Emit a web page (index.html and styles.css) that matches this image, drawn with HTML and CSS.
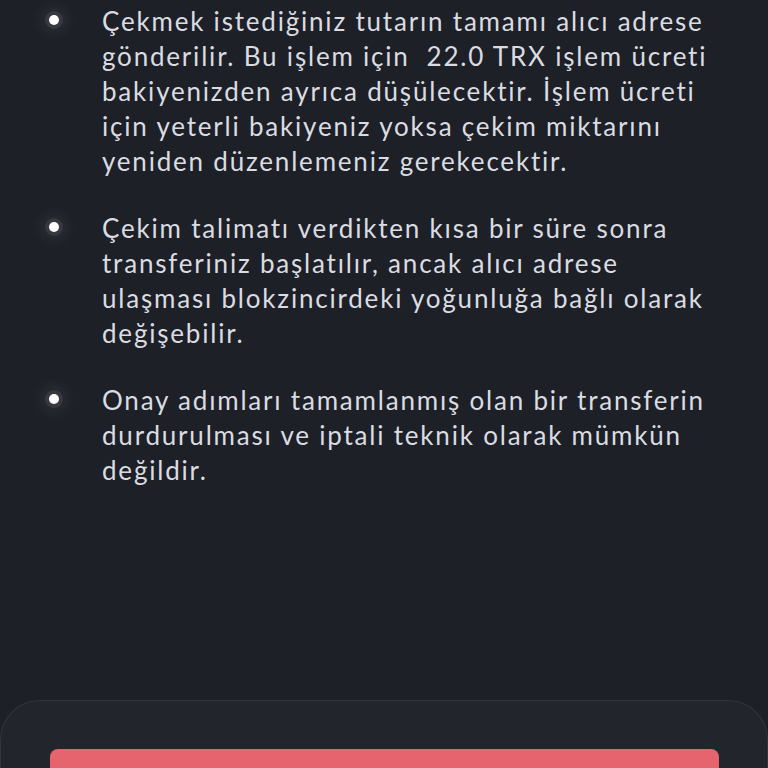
FILE: index.html
```html
<!DOCTYPE html>
<html lang="tr">
<head>
  <meta charset="UTF-8" />
  <meta name="viewport" content="width=device-width, initial-scale=1.0"/>
  <title>Çekim Bilgilendirme</title>
  <link rel="stylesheet" href="styles.css">
</head>
<body>

<!-- Bilgilendirme listesi -->
<ul class="info-list">
  <li class="info-list__item">
    <span class="info-list__dot"></span>
    <p>Çekmek istediğiniz tutarın tamamı alıcı adrese gönderilir. Bu işlem için&nbsp; 22.0 TRX işlem ücreti bakiyenizden ayrıca düşülecektir. İşlem ücreti için yeterli bakiyeniz yoksa çekim miktarını yeniden düzenlemeniz gerekecektir.</p>
  </li>
  <li class="info-list__item">
    <span class="info-list__dot"></span>
    <p>Çekim talimatı verdikten kısa bir süre sonra transferiniz başlatılır, ancak alıcı adrese ulaşması blokzincirdeki yoğunluğa bağlı olarak değişebilir.</p>
  </li>
  <li class="info-list__item">
    <span class="info-list__dot"></span>
    <p>Onay adımları tamamlanmış olan bir transferin durdurulması ve iptali teknik olarak mümkün değildir.</p>
  </li>
</ul>

<!-- Alt panel -->
<div class="bottom-sheet">
  <button type="button" class="btn-confirm" aria-label="Onayla"></button>
</div>

</body>
</html>
```

FILE: styles.css
```css
* {
  margin: 0;
  padding: 0;
  box-sizing: border-box;
}

body {
  background: #1e2027;
  font-family: Lato, Arial, sans-serif;
  color: #dadce1;
  height: 768px;
  overflow: hidden;
  display: flex;
  flex-direction: column;
}

.info-list {
  list-style: none;
  padding: 4px 40px 0 49px;
  display: flex;
  flex-direction: column;
  gap: 32px;
}

.info-list__item {
  display: flex;
  align-items: flex-start;
  gap: 43px;
}

.info-list__item p {
  font-size: 26px;
  line-height: 35px;
  letter-spacing: 1.8px;
  width: 622px;
}

.info-list__dot {
  flex: none;
  width: 10px;
  height: 10px;
  margin-top: 11px;
  border-radius: 50%;
  background: #fff;
  box-shadow: 0 0 0 4px rgba(255, 255, 255, 0.08), 0 0 14px 9px rgba(255, 255, 255, 0.06);
}

.bottom-sheet {
  margin-top: auto;
  flex: none;
  height: 68px;
  overflow: hidden;
  background: #22252b;
  border: 1px solid #33363d;
  border-bottom: none;
  border-radius: 40px 40px 0 0;
  padding: 48px 48px 0 49px;
}

.btn-confirm {
  display: block;
  width: 100%;
  height: 56px;
  background: #e5646d;
  border: none;
  border-radius: 8px;
}
```
